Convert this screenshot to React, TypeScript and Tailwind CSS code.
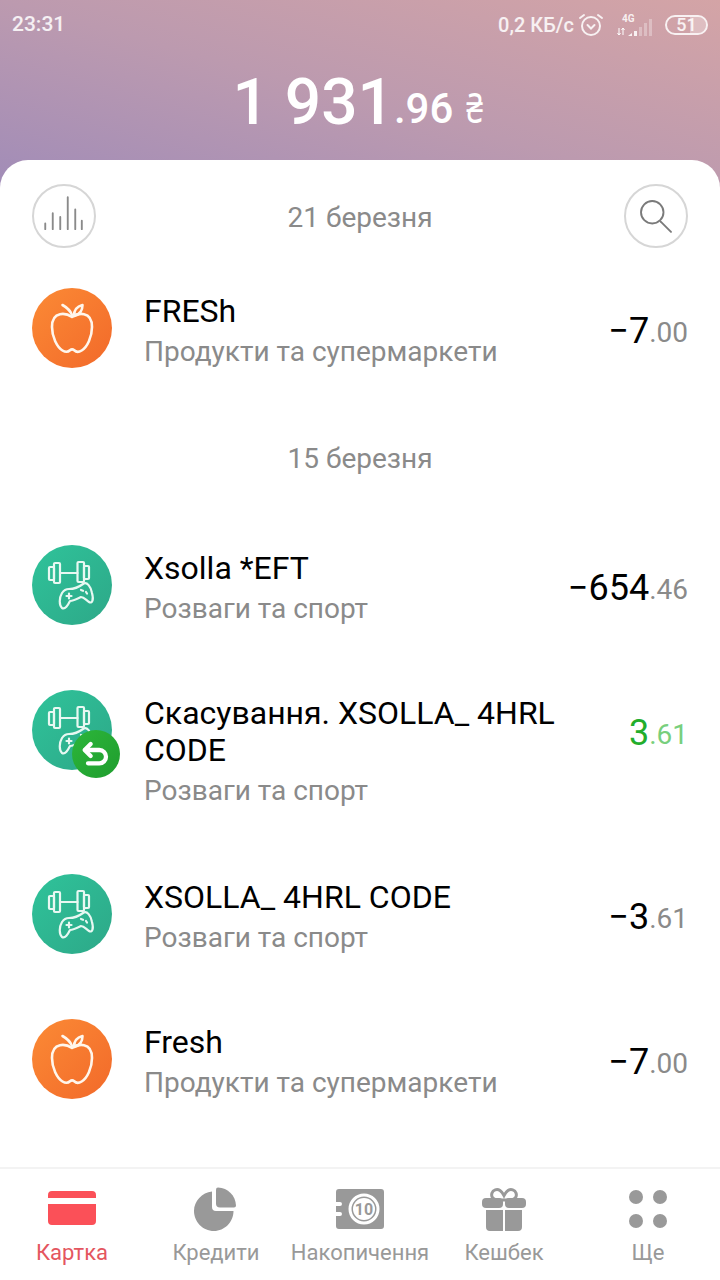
const font = { fontFamily: "Roboto, 'Noto Sans', sans-serif" };

type Tx = {
  icon: "food" | "game";
  title: string[];
  sub: string;
  whole: string;
  cents: string;
  refund?: boolean;
};

function Apple() {
  return (
    <svg viewBox="0 0 80 80" className="w-20 h-20" fill="none" stroke="#fff6ec" strokeWidth="2.6" strokeLinejoin="round" strokeLinecap="round">
      <path d="M40 29c-4-2.800-8-3.600-12-2.800-5.500 1.100-8 6-8 12.800 0 10 5 20 10.500 23.500 2.800 1.700 5.800 1.400 7.500-.2 1.200-1.100 3-1.100 4.200 0 1.700 1.600 4.700 1.900 7.500.2 5.500-3.500 10.300-13.500 10.300-23.500 0-6.800-2.500-11.700-8-12.800-4-.8-8 0-12 2.800z" />
      <path d="M40 27c-1.500-4-5-7.500-9.500-10" />
      <path d="M42 28c0-5.500 2.500-9.500 8.500-11 0 5.500-2.500 9.500-8.500 11z" />
    </svg>
  );
}

function GameGym() {
  return (
    <svg viewBox="0 0 80 80" className="w-20 h-20" fill="none" stroke="#e8f8f2" strokeWidth="2.2" strokeLinejoin="round" strokeLinecap="round">
      <rect x="22" y="18" width="6" height="20" rx="1" />
      <rect x="17" y="22" width="5" height="13" rx="1" />
      <rect x="45.500" y="17" width="6.500" height="20" rx="1" />
      <rect x="52" y="21" width="5" height="13" rx="1" />
      <path d="M28 28h17.500" />
      <path d="M37 44c5 0 10-2 14-5 4-3 8 3 9 9 2 7 0 11-3 9-3-2-5-5-8-5-4 2-8 4-11 4-2 4-5 9-8 7-3-3-3-10 0-15 2-3 4-4 7-4z" />
      <path d="M37 48.500v5M34.500 51h5" />
      <path d="M49 45l2 .8M54 47l1 1.500" />
    </svg>
  );
}

const items: Tx[] = [
  { icon: "game", title: ["Xsolla *EFT"], sub: "Розваги та спорт", whole: "−654", cents: ".46" },
  { icon: "game", title: ["Скасування. XSOLLA_ 4HRL", "CODE"], sub: "Розваги та спорт", whole: "3", cents: ".61", refund: true },
  { icon: "game", title: ["XSOLLA_ 4HRL CODE"], sub: "Розваги та спорт", whole: "−3", cents: ".61" },
  { icon: "food", title: ["Fresh"], sub: "Продукти та супермаркети", whole: "−7", cents: ".00" },
];

function Row({ tx }: { tx: Tx }) {
  return (
    <div className={`flex items-start pl-8 pr-8 ${tx.title.length > 1 ? "h-[119px]" : "h-20"}`}>
      <div className="relative w-20 h-20 shrink-0">
        <div
          className={`w-20 h-20 rounded-full ${
            tx.icon === "food" ? "bg-gradient-to-br from-[#fb8a35] to-[#f2692a]" : "bg-gradient-to-br from-[#2fc39a] to-[#2da888]"
          }`}
        >
          {tx.icon === "food" ? <Apple /> : <GameGym />}
        </div>
        {tx.refund && (
          <div className="absolute left-10 top-10 w-12 h-12 rounded-full bg-gradient-to-br from-[#2cb63a] to-[#1f9d2e] flex items-center justify-center">
            <svg viewBox="0 0 24 24" className="w-8 h-8" fill="none" stroke="#ffffff" strokeWidth="3.200" strokeLinecap="round" strokeLinejoin="round">
              <path d="M8 4.500L3.500 9 8 13.500" />
              <path d="M4 9h10.500a4.500 4.500 0 0 1 0 10H6" />
            </svg>
          </div>
        )}
      </div>
      <div className="ml-8 flex-1 pt-[5px] min-w-0">
        {tx.title.map((line) => (
          <div key={line} className="text-[32px] leading-[37px] text-black whitespace-nowrap">
            {line}
          </div>
        ))}
        <div className="mt-[3px] text-[28px] leading-[37px] text-[#8a8a8a] whitespace-nowrap">{tx.sub}</div>
      </div>
      <div className="h-20 flex items-center pt-[6px] shrink-0 whitespace-nowrap">
        <span className={`text-[36px] ${tx.refund ? "text-[#22ad2c]" : "text-black"}`}>{tx.whole}</span>
        <span className={`text-[28px] mt-[4px] ${tx.refund ? "text-[#78cf7d]" : "text-[#8a8a8a]"}`}>{tx.cents}</span>
      </div>
    </div>
  );
}

function StatusBar() {
  return (
    <div className="flex items-center justify-between pl-3 pr-3 h-[50px] text-white/85 font-medium text-[21px]">
      <span>23:31</span>
      <div className="flex items-center">
        <span className="text-[20px]">0,2 КБ/с</span>
        <svg viewBox="0 0 26 26" className="w-[26px] h-[26px] ml-[4px]" fill="none" stroke="#fff" strokeOpacity="0.85" strokeWidth="2" strokeLinecap="round">
          <circle cx="13" cy="14" r="9" />
          <path d="M9.500 13l3.500 3.500 3.500-3.500" />
          <path d="M2 6l4-3M24 6l-4-3" />
        </svg>
        <svg viewBox="0 0 40 24" className="w-10 h-6 ml-[12px]" fill="#fff" fillOpacity="0.85">
          <text x="6" y="9" fontSize="10" fontWeight="700" fontFamily="Roboto, sans-serif">4G</text>
          <path d="M3 15v7M1.500 20l1.500 2 1.500-2M7 22v-7M5.500 17l1.500-2 1.500 2" stroke="#fff" strokeWidth="1" fill="none" />
          <path d="M12 23l4-3v3z" />
          <path d="M18 18h3v5h-3z" />
          <path d="M23 14h3v9h-3zM28 10h3v13h-3zM33 6h3v17h-3z" fillOpacity="0.3" />
        </svg>
        <div className="relative ml-[9px] w-[43px] h-[20px] rounded-full border-2 border-white/85 flex items-center justify-center text-[18px] leading-none overflow-hidden">
          <div className="absolute right-0 top-0 bottom-0 w-[16px] bg-white/30" />
          <span className="relative">51</span>
        </div>
      </div>
    </div>
  );
}

const navLabels = ["Картка", "Кредити", "Накопичення", "Кешбек", "Ще"];

function NavIcon({ index }: { index: number }) {
  if (index === 0) {
    return (
      <svg viewBox="0 0 48 48" className="w-12 h-12">
        <path d="M0 10a4 4 0 0 1 4-4h40a4 4 0 0 1 4 4v3H0zM0 19h48v17a4 4 0 0 1-4 4H4a4 4 0 0 1-4-4z" fill="#fb5058" />
      </svg>
    );
  }
  if (index === 1) {
    return (
      <svg viewBox="0 0 48 48" className="w-12 h-12" fill="#999999">
        <path d="M20 6.500V22a4 4 0 0 0 4 4h17.500C41.500 37 32.500 46 22 46 10.500 46 2 36.500 2 26 2 16 10 7.500 20 6.500z" />
        <path d="M26 2.500c10 .5 17.500 8 18 18a2 2 0 0 1-2 2H28a4 4 0 0 1-4-4V4.500a2 2 0 0 1 2-2z" />
      </svg>
    );
  }
  if (index === 2) {
    return (
      <svg viewBox="0 0 48 48" className="w-12 h-12">
        <path
          d="M3 4h42a3 3 0 0 1 3 3v34a3 3 0 0 1-3 3H3a3 3 0 0 1-3-3V31h4a2 2 0 0 0 0-4H0v-6h4a2 2 0 0 0 0-4H0V7a3 3 0 0 1 3-3z"
          fill="#999999"
        />
        <circle cx="28" cy="24" r="14" fill="#999999" stroke="#ffffff" strokeWidth="3" />
        <circle cx="28" cy="24" r="11" fill="#ffffff" />
        <text x="28" y="30" textAnchor="middle" fontSize="16" fontWeight="700" fontFamily="Roboto, sans-serif" fill="#999999">10</text>
      </svg>
    );
  }
  if (index === 3) {
    return (
      <svg viewBox="0 0 48 48" className="w-12 h-12" fill="#999999">
        <path d="M17 15c-5-1-6-4-5-7 1-3 5-4.500 8-2.500 2 1.300 3 3 4 5 1-2 2-3.700 4-5 3-2 7-.5 8 2.500 1 3 0 6-5 7z" fill="none" stroke="#999999" strokeWidth="3" />
        <rect x="2" y="13" width="21" height="10" rx="4" />
        <rect x="25" y="13" width="21" height="10" rx="4" />
        <path d="M6 25h17v21H10a4 4 0 0 1-4-4zM25 25h17v17a4 4 0 0 1-4 4H25z" />
      </svg>
    );
  }
  return (
    <svg viewBox="0 0 48 48" className="w-12 h-12" fill="#999999">
      <circle cx="12" cy="12" r="7" />
      <circle cx="36" cy="12" r="7" />
      <circle cx="12" cy="36" r="7" />
      <circle cx="36" cy="36" r="7" />
    </svg>
  );
}

export default function App() {
  return (
    <div style={font} className="h-[1280px] w-[720px] flex flex-col overflow-hidden bg-white">
      {/* gradient runs on behind the card's rounded corners */}
      <div className="h-[200px] -mb-[40px] bg-gradient-to-tr from-[#9f8bb8] via-[#bc9aaf] to-[#d4a4a6]">
        <StatusBar />
        <div className="h-[110px] flex items-center justify-center text-white whitespace-nowrap pb-[4px] pl-[2px]">
          <span className="text-[64px] font-medium -ml-[3px]">1 931</span>
          <span className="text-[42px] font-medium mt-[10px]">.96</span>
          <span className="inline-block text-[42px] mt-[10px] ml-[10px] scale-x-[0.72]">₴</span>
        </div>
      </div>

      <div className="relative flex-1 bg-white rounded-t-[28px] flex flex-col">
        <div className="flex items-center justify-between px-8 pt-6">
          <div className="w-16 h-16 rounded-full border-2 border-[#d6d6d6] flex items-center justify-center">
            <svg viewBox="0 0 64 64" className="w-16 h-16" fill="none" stroke="#8a8a8a" strokeWidth="2" strokeLinecap="round">
              <path d="M12 46v-6M20 46V29M28 46V33M36 46V12M44 46V25M51 46v-9" />
            </svg>
          </div>
          <span className="text-[28px] text-[#8a8a8a] pt-[3px]">21 березня</span>
          <div className="w-16 h-16 rounded-full border-2 border-[#d6d6d6] flex items-center justify-center">
            <svg viewBox="0 0 64 64" className="w-16 h-16" fill="none" stroke="#7a7a7a" strokeWidth="2" strokeLinecap="round">
              <circle cx="28" cy="28" r="12" />
              <path d="M37 38l11 11" />
            </svg>
          </div>
        </div>

        <div className="mt-10">
          <Row tx={{ icon: "food", title: ["FRESh"], sub: "Продукти та супермаркети", whole: "−7", cents: ".00" }} />
        </div>

        <div className="mt-[71px] text-center text-[28px] leading-[40px] text-[#8a8a8a]">15 березня</div>

        <div className="mt-[66px] flex flex-col gap-[65px]">
          {items.map((tx) => (
            <Row key={tx.title[0]} tx={tx} />
          ))}
        </div>

        <nav className="mt-auto h-[113px] border-t-2 border-[#f3f3f3] grid grid-cols-5">
          {navLabels.map((label, i) => (
            <div key={label} className="flex flex-col items-center pt-[16px]">
              <NavIcon index={i} />
              <span className={`mt-[5px] text-[22px] leading-[30px] whitespace-nowrap ${i === 0 ? "text-[#e4565f]" : "text-[#999999]"}`}>{label}</span>
            </div>
          ))}
        </nav>
      </div>
    </div>
  );
}
